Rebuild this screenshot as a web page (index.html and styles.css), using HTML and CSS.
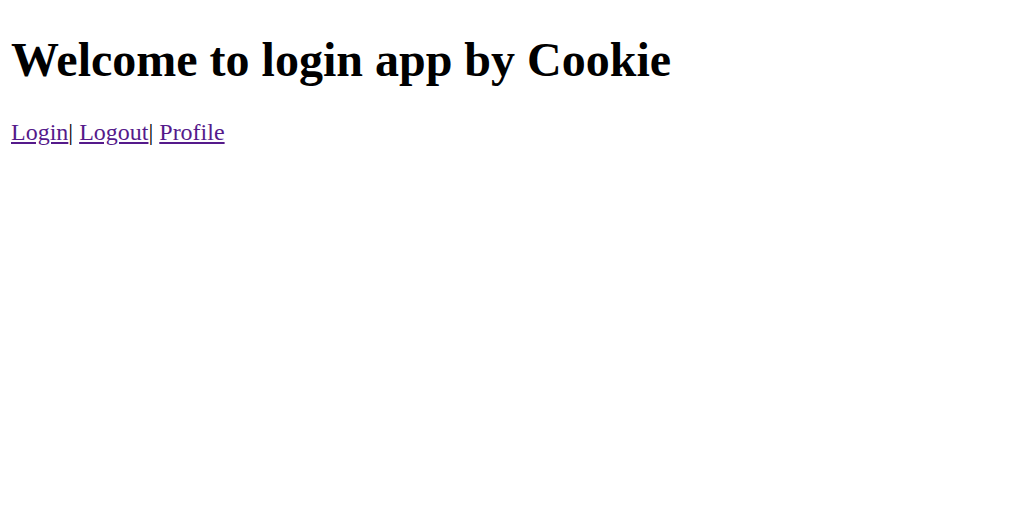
FILE: index.html
```html
<!DOCTYPE html>
<html>
<head>
<meta charset="utf-8">
<link rel="stylesheet" href="styles.css">
</head>
<body class="page">
<h1 class="title">Welcome to login app by Cookie</h1>
<p class="nav"><a class="nav-link" href="#login">Login</a>| <a class="nav-link" href="#logout">Logout</a>| <a class="nav-link" href="#profile">Profile</a></p>
</body>
</html>
```
FILE: styles.css
```css
.page {
  margin: 11px;
  font-family: "Liberation Serif", "Times New Roman", serif;
  font-size: 24px;
  color: #000;
  background: #fff;
}
.title {
  font-size: 48px;
  font-weight: bold;
  margin: 21px 0 32px;
}
.nav {
  margin: 24px 0;
}
.nav-link {
  color: #551a8b;
  text-decoration: underline;
}
```
